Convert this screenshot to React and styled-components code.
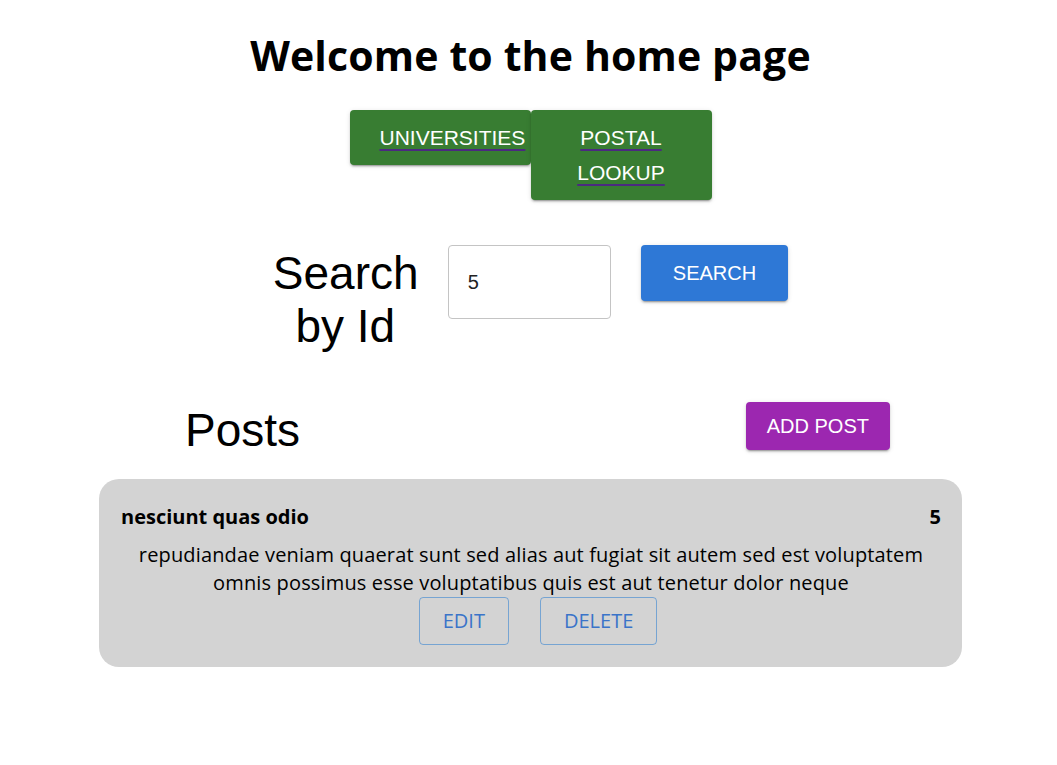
import React from "react";
import styled, { createGlobalStyle } from "styled-components";

const GlobalStyle = createGlobalStyle`
  body {
    margin: 0;
    background: #fff;
    font-family: "Open Sans", "Noto Sans", sans-serif;
    color: #000;
  }
`;

function App() {
  return (
    <>
      <GlobalStyle />
      <Page>
        <Heading>Welcome to the home page</Heading>
        <Nav>
          <NavButton>
            <NavLink href="#">UNIVERSITIES</NavLink>
          </NavButton>
          <NavButton>
            <NavLink href="#">POSTAL LOOKUP</NavLink>
          </NavButton>
        </Nav>

        <SearchRow>
          <SearchLabel>Search by Id</SearchLabel>
          <IdInput defaultValue="5" />
          <SolidButton color="#2e78d6" size="search">
            SEARCH
          </SolidButton>
        </SearchRow>

        <PostsHeader>
          <PostsTitle>Posts</PostsTitle>
          <SolidButton color="#9c27b0">ADD POST</SolidButton>
        </PostsHeader>

        <Card>
          <CardTop>
            <CardTitle>nesciunt quas odio</CardTitle>
            <CardTitle>5</CardTitle>
          </CardTop>
          <CardBody>
            repudiandae veniam quaerat sunt sed alias aut fugiat sit autem sed
            est voluptatem omnis possimus esse voluptatibus quis est aut tenetur
            dolor neque
          </CardBody>
          <CardActions>
            <OutlineButton>EDIT</OutlineButton>
            <OutlineButton>DELETE</OutlineButton>
          </CardActions>
        </Card>
      </Page>
    </>
  );
}

export default App;

const Page = styled.div`
  display: flex;
  flex-direction: column;
  align-items: center;
  padding: 28px 0 0 4px;
`;

const Heading = styled.h1`
  margin: 0;
  font-size: 41px;
  font-weight: 700;
  letter-spacing: 0.15px;
  line-height: 54px;
`;

const Nav = styled.div`
  display: flex;
  margin-top: 28px;
`;

const NavButton = styled.div`
  width: 181px;
  box-sizing: border-box;
  padding: 10px 30px;
  background: #387d32;
  border-radius: 4px;
  text-align: center;
  align-self: flex-start;
  box-shadow: 0 3px 1px -2px rgba(0, 0, 0, 0.2), 0 2px 2px 0 rgba(0, 0, 0, 0.14),
    0 1px 5px 0 rgba(0, 0, 0, 0.12);
`;

const NavLink = styled.a`
  font-family: "Liberation Sans", Arial, sans-serif;
  font-size: 21px;
  line-height: 35px;
  color: #fff;
  text-decoration: underline;
  text-decoration-color: #4b2a80;
  text-decoration-thickness: 2px;
  text-underline-offset: 4px;
`;

const SearchRow = styled.div`
  display: flex;
  align-items: flex-start;
  gap: 30px;
  margin-top: 45px;
`;

const SearchLabel = styled.div`
  width: 145px;
  padding-top: 2px;
  font-family: "Liberation Sans", Arial, sans-serif;
  font-size: 46px;
  text-align: center;
  line-height: 53px;
`;

const IdInput = styled.input`
  width: 163px;
  height: 74px;
  box-sizing: border-box;
  padding: 0 19px;
  border: 1px solid #c4c4c4;
  border-radius: 4px;
  font-family: "Liberation Sans", Arial, sans-serif;
  font-size: 20px;
  color: #222;
  outline: none;
`;

const SolidButton = styled.button`
  border: none;
  border-radius: 4px;
  background: ${(p) => p.color};
  color: #fff;
  font-family: "Liberation Sans", Arial, sans-serif;
  font-size: 20px;
  line-height: ${(p) => (p.size === "search" ? "36px" : "28px")};
  padding: ${(p) => (p.size === "search" ? "10px 32px" : "10px 21px")};
  box-shadow: 0 3px 1px -2px rgba(0, 0, 0, 0.2), 0 2px 2px 0 rgba(0, 0, 0, 0.14),
    0 1px 5px 0 rgba(0, 0, 0, 0.12);
`;

const PostsHeader = styled.div`
  width: 863px;
  box-sizing: border-box;
  display: flex;
  justify-content: space-between;
  align-items: flex-start;
  padding: 0 72px 0 86px;
  margin-top: 49px;
`;

const PostsTitle = styled.div`
  padding-top: 2px;
  font-family: "Liberation Sans", Arial, sans-serif;
  font-size: 46px;
  line-height: 53px;
`;

const Card = styled.div`
  width: 863px;
  box-sizing: border-box;
  margin-top: 22px;
  padding: 24px 21px 22px 22px;
  background: #d3d3d3;
  border-radius: 20px;
`;

const CardTop = styled.div`
  display: flex;
  justify-content: space-between;
`;

const CardTitle = styled.div`
  font-size: 20px;
  font-weight: 700;
  line-height: 28px;
`;

const CardBody = styled.p`
  margin: 10px 0 0;
  font-size: 20px;
  letter-spacing: 0.15px;
  line-height: 28px;
  text-align: center;
`;

const CardActions = styled.div`
  display: flex;
  justify-content: center;
  gap: 31px;
  padding-left: 14px;
`;

const OutlineButton = styled.button`
  font-family: "Open Sans", "Noto Sans", sans-serif;
  font-size: 20px;
  line-height: 28px;
  padding: 9px 23px;
  background: transparent;
  color: #3a74c9;
  border: 1px solid rgba(25, 118, 210, 0.5);
  border-radius: 4px;
`;
